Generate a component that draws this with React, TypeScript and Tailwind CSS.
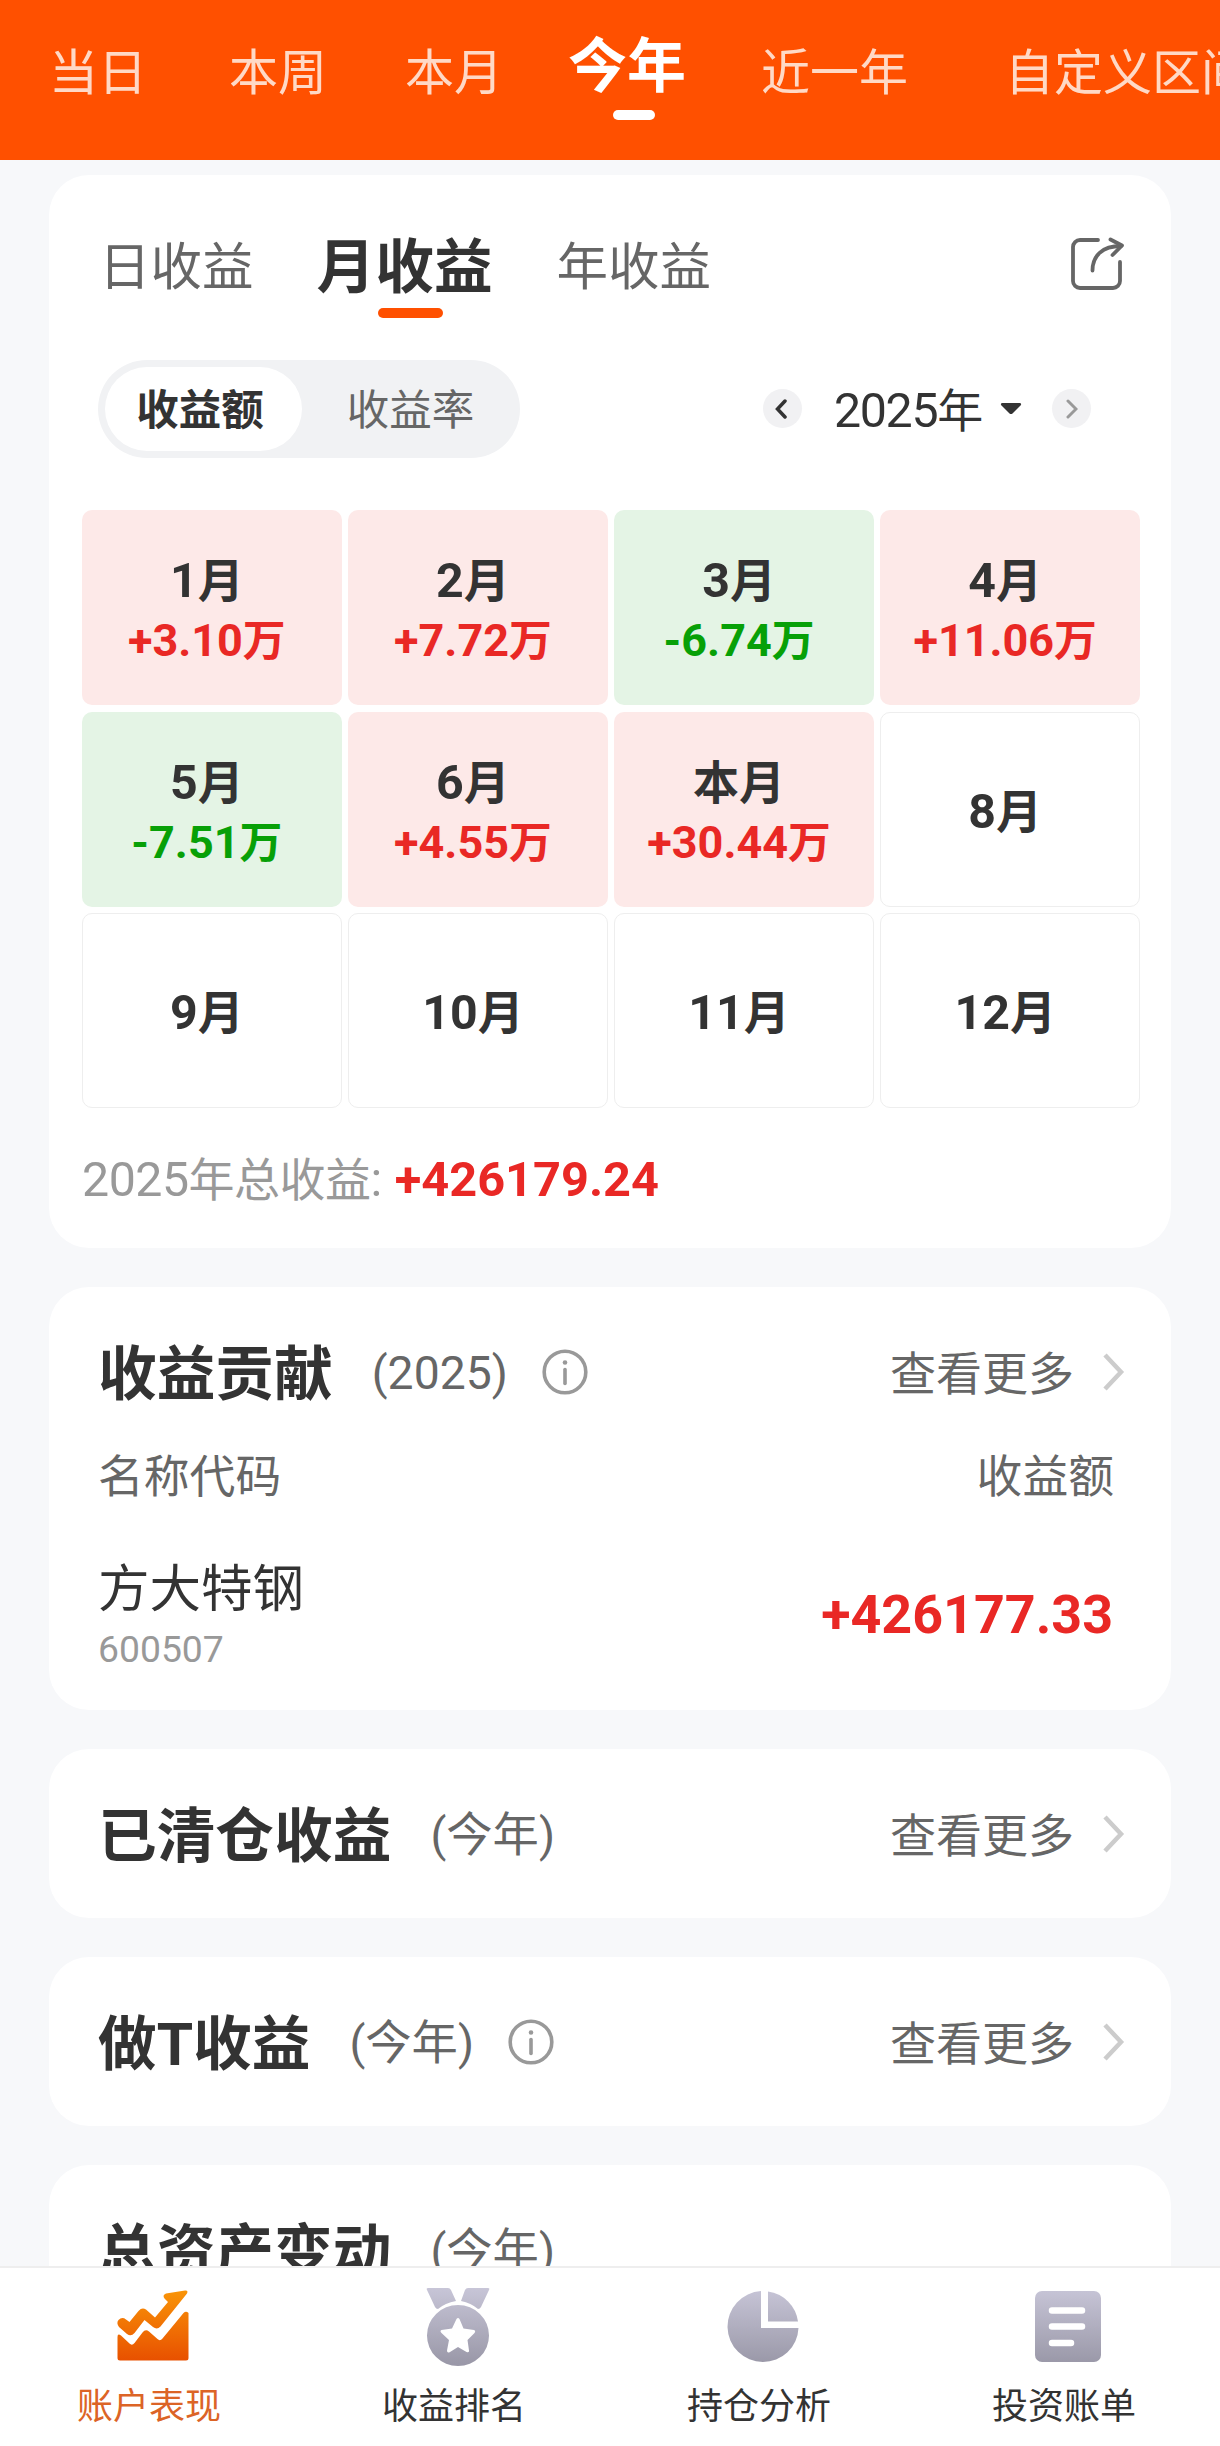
import { useState } from 'react';

const ranges = [
  { label: '当日', w: 'w-[180px]' },
  { label: '本周', w: 'w-[176px]' },
  { label: '本月', w: 'w-[163px]' },
  { label: '今年', w: 'w-[193px]' },
  { label: '近一年', w: 'w-[244px]' },
  { label: '自定义区间', w: 'w-[250px]' },
];

const months = [
  { label: '1月', value: '+3.10万' },
  { label: '2月', value: '+7.72万' },
  { label: '3月', value: '-6.74万' },
  { label: '4月', value: '+11.06万' },
  { label: '5月', value: '-7.51万' },
  { label: '6月', value: '+4.55万' },
  { label: '本月', value: '+30.44万' },
  { label: '8月' },
  { label: '9月' },
  { label: '10月' },
  { label: '11月' },
  { label: '12月' },
];

// digits are set slightly larger than the CJK glyphs beside them
function Mixed({ text }: { text: string }) {
  return (
    <>
      {text.split(/([0-9.+:-]+)/).filter(Boolean).map((s, i) => (
        /^[0-9.+:-]/.test(s)
          ? <span key={i} className="text-[1.05em]">{s}</span>
          : <span key={i}>{s}</span>
      ))}
    </>
  );
}

function ShareIcon() {
  return (
    <svg width="54" height="54" viewBox="0 0 54 54" fill="none" stroke="#666" strokeWidth="3.800" strokeLinecap="round" strokeLinejoin="round">
      <path d="M27 3H9a7 7 0 0 0-7 7v34a7 7 0 0 0 7 7h33a7 7 0 0 0 7-7V25" />
      <path d="M21.500 33.500C21.500 19 31 9 50 9" />
      <path d="M39.500 2.500L51 8.500L41.500 18" />
    </svg>
  );
}

function InfoIcon() {
  return (
    <svg width="46" height="46" viewBox="0 0 46 46" fill="none" stroke="#999" strokeWidth="3.600">
      <circle cx="23" cy="23" r="20.800" />
      <path d="M23 20.500v14" strokeLinecap="round" />
      <circle cx="23" cy="13.500" r="2.300" fill="#999" stroke="none" />
    </svg>
  );
}

function More() {
  return (
    <button className="flex items-center text-[46px] text-[#666]">
      <span className="pt-[4px]">查看更多</span>
      <svg className="ml-[27px]" width="24" height="40" viewBox="0 0 24 40" fill="none" stroke="#ccc" strokeWidth="4.500">
        <path d="M4 3l16 17L4 37" />
      </svg>
    </button>
  );
}

function SectionHead({ title, sub, info, more = true }: { title: string; sub: string; info?: boolean; more?: boolean }) {
  return (
    <div className="flex h-[169px] items-center pl-[49px] pr-[46px]">
      <h2 className="pt-[7px] text-[58.700px] font-bold text-[#333]">{title}</h2>
      <span className="ml-[39px] pt-[4px] text-[46.300px] text-[#666]">({sub})</span>
      {info && <span className="ml-[34px]"><InfoIcon /></span>}
      {more && <div className="ml-auto"><More /></div>}
    </div>
  );
}

function NavIcon({ name }: { name: string }) {
  return (
    <svg width="76" height="80" viewBox="0 0 76 80">
      <defs>
        <linearGradient id="navOrange" gradientUnits="userSpaceOnUse" x1="0" y1="4" x2="0" y2="74">
          <stop offset="0" stopColor="#f99408" />
          <stop offset="1" stopColor="#e85000" />
        </linearGradient>
        <linearGradient id="navGray" gradientUnits="userSpaceOnUse" x1="0" y1="0" x2="0" y2="76">
          <stop offset="0" stopColor="#c8c6d8" />
          <stop offset="1" stopColor="#9a98a8" />
        </linearGradient>
      </defs>
      {name === 'chart' && (
        <g fill="url(#navOrange)">
          <path d="M70 3.500Q73.500 3 72 6.500L45.500 39.500Q42 43 38 40L29.500 33L19.500 46Q16 50 12 47L4 40Q1 36 3.500 33Q7 29.500 11 32.500L14.500 35L23.500 24Q27 20 31 22.500L40 30.500L53 15L49.500 11.500Q47 8 51 6.500Z" />
          <path d="M2.500 50Q2.500 46 6 48.500L14.500 56.500Q17 59 19.500 56L27.500 45.500Q30.500 41.500 34 44.500L42.500 52Q45 54.500 47.500 51.500L68.500 26Q71 23.500 73.500 26V71Q73.500 73.500 71 73.500H5Q2.500 73.500 2.500 71Z" />
        </g>
      )}
      {name === 'medal' && (
        <g fill="url(#navGray)">
          <path d="M8 1h20q2 0 3 2l5 11q-11 2-18 8q-2 0-3-2L7 3q-1-2 1-2zM48 1h20q2 0 1 2l-8 17q-1 2-3 2q-7-6-17-8l4-11q1-2 3-2z" />
          <path fillRule="evenodd" d="M38 18a31 30.500 0 1 1 0 61a31 30.500 0 1 1 0-61zM36.500 32l-4.500 9.500-10.500 1.500q-2 1 0 3l7.500 7-2 10.500q0 3 3 1.500l8-5 8.500 5q3 1 2.500-1.500l-1.500-10.500 7-7q1.500-2-.5-3l-10.500-1.500-4-9.500q-1.500-2-3 0z" />
        </g>
      )}
      {name === 'pie' && (
        <g fill="url(#navGray)">
          <path d="M36 4.100A35.500 35.500 0 1 0 73.500 41H36z" />
          <path d="M43 4.500V34.500H73A35 35 0 0 0 43 4.500z" />
        </g>
      )}
      {name === 'bill' && (
        <>
          <rect x="5" y="4" width="66" height="71" rx="7" fill="url(#navGray)" />
          <path d="M22 23.500h30M22 39.500h30M22 56h19" stroke="#fff" strokeWidth="6.500" strokeLinecap="round" />
        </>
      )}
    </svg>
  );
}

const navs = [
  { key: 'chart', label: '账户表现' },
  { key: 'medal', label: '收益排名' },
  { key: 'pie', label: '持仓分析' },
  { key: 'bill', label: '投资账单' },
];

export default function App() {
  const [range, setRange] = useState('今年');
  const [nav, setNav] = useState('chart');

  return (
    <div className="flex h-[2446px] w-[1220px] flex-col overflow-hidden bg-[#f7f8fa] font-[Roboto,'Noto_Sans_CJK_SC',sans-serif] leading-none text-[#333]">
      {/* 时间区间 */}
      <header className="flex h-[160px] shrink-0 overflow-hidden bg-[#ff5000] pl-[49px]">
        {ranges.map(r => (
          <button key={r.label} onClick={() => setRange(r.label)} className={`relative flex shrink-0 items-center whitespace-nowrap ${r.w} ${range === r.label ? 'h-[132px] text-[59px] font-bold text-white' : 'h-[147px] text-[49px] text-[#ffd9c6]'}`}>
            {r.label}
            {range === r.label && <span className="absolute left-[45px] top-[110px] h-[10px] w-[42px] rounded-full bg-white" />}
          </button>
        ))}
      </header>

      <main className="flex min-h-0 flex-1 flex-col gap-[39px] overflow-hidden px-[49px] pt-[15px]">
        {/* 收益日历 */}
        <section className="h-[1073px] shrink-0 rounded-[40px] bg-white px-[33px]">
          <div className="flex h-[185px] items-center pl-[17px] pr-[13px] text-[51.500px] text-[#666]">
            <span>日收益</span>
            <span className="relative ml-[63px] pt-[2px] text-[58.700px] font-bold text-[#333]">
              月收益
              <span className="absolute -bottom-[20px] left-[61px] h-[10px] w-[65px] rounded-full bg-[#ff5000]" />
            </span>
            <span className="ml-[64px]">年收益</span>
            <span className="ml-auto pb-[7px]"><ShareIcon /></span>
          </div>

          <div className="flex h-[98px] items-center pl-[16px] pr-[47px]">
            <div className="flex h-[98px] w-[422px] items-center rounded-full bg-[#f1f2f4] p-[7px] text-[42.500px]">
              <button className="h-[84px] w-[197px] rounded-full bg-white pr-[7px] pt-[4px] font-bold">收益额</button>
              <button className="flex-1 pl-[6px] pt-[4px] text-[#666]">收益率</button>
            </div>
            <div className="ml-auto flex items-center">
              <button className="flex h-[39px] w-[39px] items-center justify-center rounded-full bg-[#f1f1f3]">
                <svg width="14" height="20" viewBox="0 0 14 20" fill="none" stroke="#333" strokeWidth="3.500" strokeLinecap="round"><path d="M10 2L2.500 10l7.500 8" /></svg>
              </button>
              <span className="ml-[32px] pt-[4px] text-[46px] tracking-[-1.300px]"><Mixed text="2025年" /></span>
              <svg className="ml-[18px]" width="22" height="12" viewBox="0 0 22 12"><path d="M2 0h18q2 1 .5 2.500L12.500 10.500q-1.500 1-3 0L1.500 2.500Q0 1 2 0z" fill="#333" /></svg>
              <button className="ml-[30px] flex h-[39px] w-[39px] items-center justify-center rounded-full bg-[#f1f1f3]">
                <svg width="12" height="20" viewBox="0 0 12 20" fill="none" stroke="#999" strokeWidth="3" strokeLinecap="round"><path d="M2 2l8 8-8 8" /></svg>
              </button>
            </div>
          </div>

          <div className="mt-[52px] grid h-[598px] w-[1058px] grid-cols-4 grid-rows-3 gap-[6.500px]">
            {months.map(m => (
              <div key={m.label} className={`flex flex-col items-center justify-center rounded-[10px] pr-[10px] text-[46px] font-bold ${!m.value ? 'border border-[#eee] pt-[5px]' : m.value[0] === '+' ? 'bg-[#fde9e8] pt-[7px]' : 'bg-[#e4f4e5] pt-[7px]'}`}>
                <span className="leading-[60px]"><Mixed text={m.label} /></span>
                {m.value && <span className={`text-[42.800px] leading-[60px] ${m.value[0] === '+' ? 'text-[#e92825]' : 'text-[#07a007]'}`}><Mixed text={m.value} /></span>}
              </div>
            ))}
          </div>

          <div className="mt-[42px] flex h-[60px] items-center text-[46px] text-[#999]">
            <span className="tracking-[-0.500px]"><Mixed text="2025年总收益:" /></span>
            <span className="ml-[13px] text-[48.700px] font-bold text-[#e92825]">+426179.24</span>
          </div>
        </section>

        {/* 收益贡献 */}
        <section className="h-[423px] shrink-0 rounded-[40px] bg-white">
          <SectionHead title="收益贡献" sub="2025" info />
          <div className="-mt-[8px] flex h-[60px] items-center justify-between pl-[49px] pr-[57px] text-[45.800px] text-[#666]">
            <span>名称代码</span>
            <span>收益额</span>
          </div>
          <div className="mt-[50px] flex items-center justify-between pl-[49px] pr-[58px]">
            <div>
              <div className="text-[51.500px] leading-[64px]">方大特钢</div>
              <div className="text-[37.300px] leading-[54px] text-[#999]">600507</div>
            </div>
            <span className="pb-[4px] text-[53.800px] font-bold text-[#e92825]">+426177.33</span>
          </div>
        </section>

        <section className="shrink-0 rounded-[40px] bg-white"><SectionHead title="已清仓收益" sub="今年" /></section>
        <section className="shrink-0 rounded-[40px] bg-white"><SectionHead title="做T收益" sub="今年" info /></section>
        <section className="shrink-0 rounded-[40px] bg-white"><SectionHead title="总资产变动" sub="今年" more={false} /></section>
      </main>

      {/* 底部导航 */}
      <nav className="grid h-[180px] shrink-0 grid-cols-4 border-t-2 border-[#eee] bg-white">
        {navs.map(n => (
          <button key={n.key} onClick={() => setNav(n.key)} className={`flex flex-col items-center justify-start pt-[19px] text-[36px] ${nav === n.key ? 'text-[#dc6426]' : 'text-[#333]'}`}>
            <NavIcon name={n.key} />
            <span className="mr-[7px] mt-[22px]">{n.label}</span>
          </button>
        ))}
      </nav>
    </div>
  );
}
